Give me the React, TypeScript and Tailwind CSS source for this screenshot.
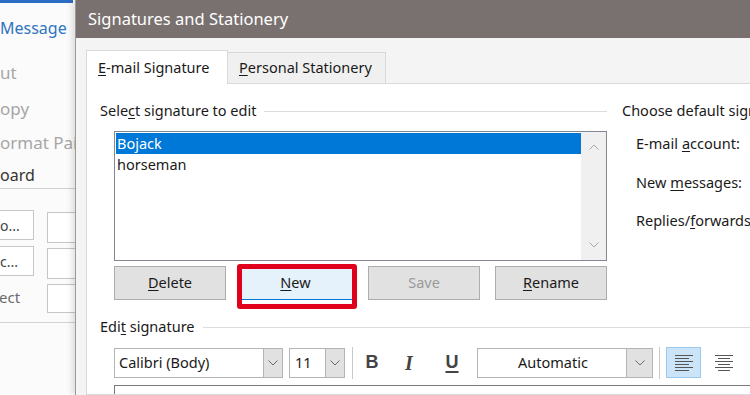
import React from "react";

const ChevDown = ({ c = "#6a6a6a" }: { c?: string }) => (
  <svg width="10" height="6" viewBox="0 0 10 6">
    <path d="M0.5 0.5L5 5L9.5 0.5" stroke={c} fill="none" strokeWidth="1" />
  </svg>
);
const ChevUp = ({ c = "#a8a8a8" }: { c?: string }) => (
  <svg width="10" height="6" viewBox="0 0 10 6">
    <path d="M0.5 5.5L5 1L9.5 5.5" stroke={c} fill="none" strokeWidth="1" />
  </svg>
);

const Btn = ({
  children,
  w,
  cls = "",
}: {
  children: React.ReactNode;
  w: string;
  cls?: string;
}) => (
  <div
    className={`${w} h-[34px] flex items-center justify-center border border-[#adadad] bg-[#e1e1e1] text-[14.5px] text-[#1a1a1a] ${cls}`}
  >
    {children}
  </div>
);

const AlignLeft = () => (
  <svg width="22" height="20" viewBox="0 0 22 20">
    {[2, 5, 8, 11, 14, 17].map((y, i) => (
      <line
        key={y}
        x1="2"
        x2={i % 2 === 0 ? 20 : 16}
        y1={y + 0.5}
        y2={y + 0.5}
        stroke="#555"
        strokeWidth="1"
      />
    ))}
  </svg>
);
const AlignCenter = () => (
  <svg width="22" height="20" viewBox="0 0 22 20">
    {[2, 5, 8, 11, 14, 17].map((y, i) => (
      <line
        key={y}
        x1={i % 2 === 0 ? 2 : 5}
        x2={i % 2 === 0 ? 20 : 17}
        y1={y + 0.5}
        y2={y + 0.5}
        stroke="#555"
        strokeWidth="1"
      />
    ))}
  </svg>
);

export default function App() {
  return (
    <div className="relative w-[750px] h-[395px] overflow-hidden bg-white font-['Noto_Sans',sans-serif]">
      {/* Background Outlook window */}
      <div className="absolute left-0 top-0 w-[76px] h-[395px] bg-[#fbfbfb] flex flex-col">
        <div className="h-[3px] w-[73px] bg-[#2b6cc4]" />
        <div className="h-[50px] flex items-center text-[16px] text-[#2f74c0] pl-0 whitespace-nowrap">
          Message
        </div>
        <div className="h-[40px] flex items-center text-[17px] text-[#a6a6a6] whitespace-nowrap">
          ut
        </div>
        <div className="h-[32px] flex items-center text-[17px] text-[#a6a6a6] whitespace-nowrap">
          opy
        </div>
        <div className="h-[36px] flex items-center text-[17px] text-[#a6a6a6] whitespace-nowrap">
          ormat Painter
        </div>
        <div className="h-[28px] flex items-center text-[16px] text-[#333] border-b border-[#d2d2d2] whitespace-nowrap">
          oard
        </div>
        <div className="h-[134px] flex border-b border-[#d2d2d2]">
          <div className="w-[35px] shrink-0 flex flex-col pt-[21px] -ml-[1px]">
            <div className="h-[30px] border border-[#c6c6c6] bg-white flex items-center text-[14px] text-[#444] whitespace-nowrap">
              o...
            </div>
            <div className="h-[30px] mt-[6px] border border-[#c6c6c6] bg-white flex items-center text-[14px] text-[#444] whitespace-nowrap">
              c...
            </div>
            <div className="h-[30px] mt-[6px] flex items-center text-[15px] text-[#6a6a6a] whitespace-nowrap">
              ect
            </div>
          </div>
          <div className="flex flex-col pt-[23px] ml-[13px] w-[40px] shrink-0">
            <div className="h-[31px] border border-[#c6c6c6] bg-white" />
            <div className="h-[31px] mt-[5px] border border-[#c6c6c6] bg-white" />
            <div className="h-[29px] mt-[5px] border border-[#c6c6c6] bg-white" />
          </div>
        </div>
      </div>

      {/* Dialog */}
      <div className="absolute left-[75px] top-0 w-[700px] h-[395px] flex flex-col border-l border-[#9a9a9a] shadow-[-3px_0_6px_rgba(0,0,0,0.12)] bg-[#f4f4f4]">
        <div className="h-[38px] shrink-0 bg-[#79716f] text-white text-[16.5px] flex items-center pl-[12px]">
          Signatures and Stationery
        </div>
        {/* Tabs */}
        <div className="flex items-end pl-[10px] pt-[12px] text-[14.5px] text-[#1a1a1a]">
          <div className="w-[142px] h-[34px] bg-white border border-[#d9d9d9] border-b-0 flex items-center pl-[11px] relative z-10 -mb-px">
            <span>
              <u className="underline-offset-2">E</u>-mail Signature
            </span>
          </div>
          <div className="w-[158px] h-[31px] bg-[#f0f0f0] border border-[#d9d9d9] border-l-0 border-b-0 flex items-center pl-[11px]">
            <span>
              <u className="underline-offset-2">P</u>ersonal Stationery
            </span>
          </div>
        </div>
        {/* Panel */}
        <div className="ml-[10px] flex-1 bg-white border border-[#d9d9d9] flex flex-col pl-[13px] text-[14.5px] text-[#1a1a1a]">
          <div className="flex pt-[17px]">
            {/* left column */}
            <div className="w-[507px] shrink-0 flex flex-col">
              <div className="h-[20px] flex items-center">
                <span className="whitespace-nowrap">
                  Sele<u className="underline-offset-2">c</u>t signature to edit
                </span>
                <div className="flex-1 h-px bg-[#dcdcdc] ml-[8px]" />
              </div>
              <div className="ml-[14px] mt-[10px] h-[130px] border border-[#828790] flex">
                <div className="flex-1 pt-[1px] pl-[1px] flex flex-col">
                  <div className="h-[21px] bg-[#0078d7] text-white flex items-center pl-[1px]">
                    Bojack
                  </div>
                  <div className="h-[21px] flex items-center pl-[1px]">
                    horseman
                  </div>
                </div>
                <div className="w-[25px] bg-[#f0f0f0] flex flex-col items-center justify-between py-[12px]">
                  <ChevUp />
                  <ChevDown c="#a8a8a8" />
                </div>
              </div>
              <div className="ml-[14px] mt-[5px] flex">
                <Btn w="w-[112px]">
                  <span>
                    <u className="underline-offset-2">D</u>elete
                  </span>
                </Btn>
                <div className="relative ml-[12px]">
                  <div className="w-[115px] h-[34px] flex items-center justify-center bg-[#e5f1fb] border-b border-[#0078d7] text-[14.5px]">
                    <span>
                      <u className="underline-offset-2">N</u>ew
                    </span>
                  </div>
                  <div className="absolute left-[-1px] top-[-2px] w-[120px] h-[45px] border-[5px] border-[#e0001b] rounded-[3px]" />
                </div>
                <Btn w="w-[112px] ml-[15px]" cls="text-[#9a9a9a]">
                  Save
                </Btn>
                <Btn w="w-[112px] ml-[15px]">
                  <span>
                    <u className="underline-offset-2">R</u>ename
                  </span>
                </Btn>
              </div>
            </div>
            {/* right column */}
            <div className="ml-[15px] flex flex-col whitespace-nowrap">
              <div className="h-[20px] flex items-center">Choose default signature</div>
              <div className="pl-[14px] flex flex-col">
                <div className="h-[26px] mt-[10px] flex items-center">
                  E-mail <u className="underline-offset-2 ml-[4px]">a</u>ccount:
                </div>
                <div className="h-[26px] mt-[13px] flex items-center">
                  New <u className="underline-offset-2 ml-[4px]">m</u>essages:
                </div>
                <div className="h-[26px] mt-[12px] flex items-center">
                  Replies/<u className="underline-offset-2">f</u>orwards:
                </div>
              </div>
            </div>
          </div>
          {/* Edit signature */}
          <div className="h-[20px] mt-[17px] flex items-center">
            <span className="whitespace-nowrap">
              Edi<u className="underline-offset-2">t</u> signature
            </span>
            <div className="flex-1 h-px bg-[#dcdcdc] ml-[8px]" />
          </div>
          <div className="ml-[14px] mt-[10px] h-[31px] flex items-center">
            <div className="w-[169px] h-[30px] border border-[#b4b4b4] bg-white flex items-center">
              <span className="flex-1 pl-[4px]">Calibri (Body)</span>
              <div className="w-[19px] h-[28px] bg-[#e1e1e1] border-l border-[#b4b4b4] flex items-center justify-center">
                <ChevDown />
              </div>
            </div>
            <div className="ml-[6px] w-[56px] h-[30px] border border-[#b4b4b4] bg-white flex items-center">
              <span className="flex-1 pl-[5px]">11</span>
              <div className="w-[19px] h-[28px] bg-[#e1e1e1] border-l border-[#b4b4b4] flex items-center justify-center">
                <ChevDown />
              </div>
            </div>
            <div className="ml-[7px] w-px h-[32px] bg-[#c8c8c8]" />
            <div className="w-[40px] h-[30px] flex items-center justify-center font-['Liberation_Sans',sans-serif] font-bold text-[18px] text-[#444] -ml-[1px]">
              B
            </div>
            <div className="w-[30px] h-[30px] flex items-center justify-center font-['Liberation_Serif',serif] italic font-bold text-[20px] text-[#444] ml-[2px]">
              I
            </div>
            <div className="w-[30px] h-[30px] flex items-center justify-center font-['Liberation_Sans',sans-serif] font-bold text-[18px] text-[#444] underline underline-offset-[3px] decoration-[2px] ml-[13px]">
              U
            </div>
            <div className="ml-[10px] w-[176px] h-[30px] border border-[#b4b4b4] bg-white flex items-center">
              <span className="flex-1 text-center pl-[2px]">Automatic</span>
              <div className="w-[26px] h-[28px] bg-[#e1e1e1] border-l border-[#b4b4b4] flex items-center justify-center">
                <ChevDown />
              </div>
            </div>
            <div className="ml-[6px] w-px h-[32px] bg-[#c8c8c8]" />
            <div className="ml-[6px] w-[35px] h-[31px] bg-[#cce4f7] border border-[#99c9ef] flex items-center justify-center">
              <AlignLeft />
            </div>
            <div className="ml-[8px] w-[30px] h-[31px] flex items-center justify-center">
              <AlignCenter />
            </div>
          </div>
          <div className="ml-[14px] mt-[7px] flex-1 border-t border-l border-[#7a7a7a] bg-white" />
        </div>
      </div>
    </div>
  );
}
